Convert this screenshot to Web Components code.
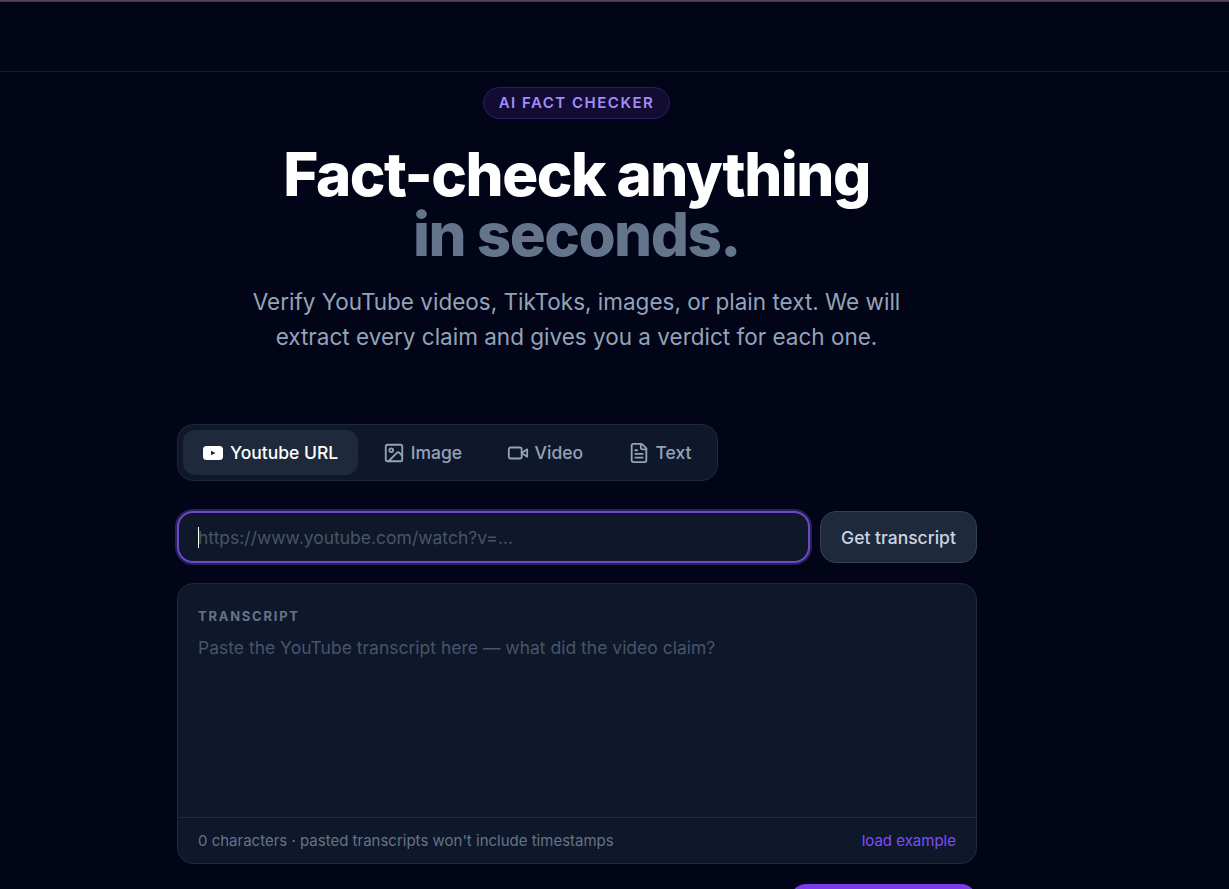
<!DOCTYPE html>
<html><head><meta charset="utf-8"><style>
html,body{margin:0;height:889px;overflow:hidden;background:#020417;font-family:Inter,sans-serif}
</style></head><body>
<fact-page></fact-page>
<script>
const icons = {
  yt: '<svg width="22" height="22" viewBox="0 0 22 22"><rect x="1" y="4" width="20" height="14" rx="3.5" fill="#fff"/><path d="M9 8.7l4.5 2.3-4.5 2.3z" fill="#1e293b"/></svg>',
  image: '<svg width="22" height="22" viewBox="0 0 24 24" fill="none" stroke="currentColor" stroke-width="2" stroke-linecap="round" stroke-linejoin="round"><rect x="3" y="3" width="18" height="18" rx="2"/><circle cx="9" cy="9" r="2"/><path d="m21 15-3.086-3.086a2 2 0 0 0-2.828 0L6 21"/></svg>',
  video: '<svg width="22" height="22" viewBox="0 0 24 24" fill="none" stroke="currentColor" stroke-width="2" stroke-linecap="round" stroke-linejoin="round"><path d="m22 8-6 4 6 4V8Z"/><rect x="2" y="6" width="14" height="12" rx="2"/></svg>',
  text: '<svg width="22" height="22" viewBox="0 0 24 24" fill="none" stroke="currentColor" stroke-width="2" stroke-linecap="round" stroke-linejoin="round"><path d="M15 2H6a2 2 0 0 0-2 2v16a2 2 0 0 0 2 2h12a2 2 0 0 0 2-2V7Z"/><path d="M14 2v4a2 2 0 0 0 2 2h4"/><path d="M10 9H8"/><path d="M16 13H8"/><path d="M16 17H8"/></svg>'
};

class TabItem extends HTMLElement {
  connectedCallback() {
    this.attachShadow({ mode: 'open' });
    this.shadowRoot.innerHTML = `
      <style>
        :host { display: flex; align-items: center; gap: 5.5px; height: 45px; padding: 0 20px 0 19px; border-radius: 12px; font-size: 17.5px; font-weight: 500; color: #94a3b8; }
        :host([active]) { gap: 6px; background: #1e293b; color: #fff; }
      </style>
      ${icons[this.getAttribute('icon')]}<slot></slot>`;
  }
}
customElements.define('tab-item', TabItem);

class FactPage extends HTMLElement {
  connectedCallback() {
    this.attachShadow({ mode: 'open' });
    this.shadowRoot.innerHTML = `
      <style>
        :host { display: block; height: 889px; overflow: hidden; color: #fff; }
        .top { box-sizing: border-box; height: 72px; border-bottom: 1px solid #151a2b; background: linear-gradient(#5a4658 0 1px, #43354c 1px 2px, transparent 2px); }
        .wrap { width: 1154px; }
        .hero { display: flex; flex-direction: column; align-items: center; padding-right: 1px; }
        .badge { margin-top: 15px; height: 32px; box-sizing: border-box; padding: 0 15px 1px; display: flex; align-items: center; border: 1px solid #2a1f5e; border-radius: 16px; background: #120c33; color: #a78bfa; font-size: 15px; font-weight: 600; letter-spacing: 1.5px; }
        h1 { margin: 25px 0 0; font-size: 60px; line-height: 60px; font-weight: 800; letter-spacing: -1.5px; text-align: center; }
        h1 span { color: #64748b; display: block; }
        p { margin: 20px 0 0; width: 700px; text-align: center; font-size: 22.5px; line-height: 35px; color: #94a3b8; }
        .main { width: 800px; margin: 70px auto 0; }
        .tabs { display: inline-flex; gap: 6px; padding: 5px; border: 1px solid #1e293b; border-radius: 16px; background: #0f172a; vertical-align: top; }
        .row { display: flex; gap: 10px; margin-top: 30px; }
        .input { flex: 1; height: 52px; box-sizing: border-box; padding: 0 19px; border: 2px solid #6b4bc2; border-radius: 16px; background: #0f172a; box-shadow: 0 0 0 2px #2a1f5e; color: #475569; font-size: 17.5px; display: flex; align-items: center; }
        .caret { width: 1px; height: 21px; margin-right: -1px; background: #fff; }
        .btn { width: 157px; height: 52px; box-sizing: border-box; border: 1px solid #334155; border-radius: 16px; background: #1e293b; color: #cbd5e1; font-size: 17.5px; font-weight: 500; display: flex; align-items: center; justify-content: center; }
        .card { margin-top: 20px; height: 281px; box-sizing: border-box; border: 1px solid #1e293b; border-radius: 16px; background: #0f172a; display: flex; flex-direction: column; }
        .body { flex: 1; padding: 24px 20px 0; }
        .label { font-size: 13px; font-weight: 700; letter-spacing: 1.75px; color: #64748b; }
        .ph { margin-top: 13px; font-size: 17.5px; color: #475569; }
        .foot { height: 45px; border-top: 1px solid #1e293b; padding: 0 20px; display: flex; justify-content: space-between; align-items: center; font-size: 15px; color: #64748b; }
        .foot b { font-weight: 400; color: #7c4dff; }
        .go { width: 187px; height: 52px; margin: 20px 0 0 auto; border-radius: 16px; background: #7c3aed; }
      </style>
      <div class="top"></div>
      <div class="wrap">
        <div class="hero">
          <div class="badge">AI FACT CHECKER</div>
          <h1>Fact-check anything<span>in seconds.</span></h1>
          <p>Verify YouTube videos, TikToks, images, or plain text. We will extract every claim and gives you a verdict for each one.</p>
        </div>
        <div class="main">
          <div class="tabs">
            <tab-item icon="yt" active>Youtube URL</tab-item>
            <tab-item icon="image">Image</tab-item>
            <tab-item icon="video">Video</tab-item>
            <tab-item icon="text">Text</tab-item>
          </div>
          <div class="row">
            <div class="input"><span class="caret"></span>https://www.youtube.com/watch?v=...</div>
            <div class="btn">Get transcript</div>
          </div>
          <div class="card">
            <div class="body">
              <div class="label">TRANSCRIPT</div>
              <div class="ph">Paste the YouTube transcript here — what did the video claim?</div>
            </div>
            <div class="foot"><span>0 characters · pasted transcripts won't include timestamps</span><b>load example</b></div>
          </div>
          <div class="go"></div>
        </div>
      </div>`;
  }
}
customElements.define('fact-page', FactPage);
</script>
</body></html>
